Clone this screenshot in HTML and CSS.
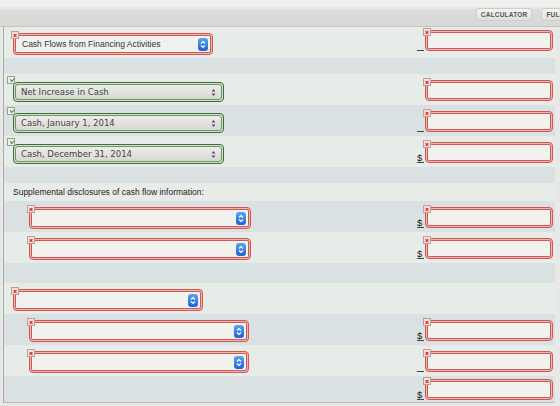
FILE: index.html
```html
<!DOCTYPE html>
<html lang="en">
<head>
    <meta charset="UTF-8">
    <title>Statement of Cash Flows</title>
    <link rel="stylesheet" href="styles.css">
</head>
<body>
    <div class="toolbar">
        <button class="tool-btn">Calculator</button>
        <button class="tool-btn">Full Screen</button>
    </div>

    <div class="sheet">
        <!-- financing section heading -->
        <div class="row">
            <div class="left">
                <div class="field bad indent-1 w-200">
                    <span class="mark x"></span>
                    <div class="box">
                        <span class="label">Cash Flows from Financing Activities</span>
                        <span class="stepper"><svg width="10" height="13" viewBox="0 0 10 13"><path d="M3 5.5 5 3.5 7 5.5M3 7.5 5 9.5 7 7.5" fill="none" stroke="#fff" stroke-width="1.2"/></svg></span>
                    </div>
                </div>
            </div>
            <div class="right top">
                <span class="unit"></span>
                <div class="field bad amount"><span class="mark x"></span><div class="box"></div></div>
            </div>
        </div>

        <div class="row alt spacer"></div>

        <div class="row">
            <div class="left">
                <div class="field good indent-1 w-211">
                    <span class="mark ok"></span>
                    <div class="box plain">
                        <span class="label">Net Increase in Cash</span>
                        <svg class="arrows" width="5" height="9" viewBox="0 0 5 9"><path d="M2.5 1 4.5 3.5H.5zM2.5 8 .5 5.5h4z" fill="#555"/></svg>
                    </div>
                </div>
            </div>
            <div class="right">
                <span class="unit none"></span>
                <div class="field bad amount"><span class="mark x"></span><div class="box"></div></div>
            </div>
        </div>

        <div class="row alt">
            <div class="left">
                <div class="field good indent-1 w-211">
                    <span class="mark ok"></span>
                    <div class="box plain">
                        <span class="label">Cash, January 1, 2014</span>
                        <svg class="arrows" width="5" height="9" viewBox="0 0 5 9"><path d="M2.5 1 4.5 3.5H.5zM2.5 8 .5 5.5h4z" fill="#555"/></svg>
                    </div>
                </div>
            </div>
            <div class="right">
                <span class="unit"></span>
                <div class="field bad amount"><span class="mark x"></span><div class="box"></div></div>
            </div>
        </div>

        <div class="row">
            <div class="left">
                <div class="field good indent-1 w-211">
                    <span class="mark ok"></span>
                    <div class="box plain">
                        <span class="label">Cash, December 31, 2014</span>
                        <svg class="arrows" width="5" height="9" viewBox="0 0 5 9"><path d="M2.5 1 4.5 3.5H.5zM2.5 8 .5 5.5h4z" fill="#555"/></svg>
                    </div>
                </div>
            </div>
            <div class="right">
                <span class="unit">$</span>
                <div class="field bad amount"><span class="mark x"></span><div class="box"></div></div>
            </div>
        </div>

        <div class="row alt spacer"></div>

        <div class="row note">Supplemental disclosures of cash flow information:</div>

        <div class="row alt">
            <div class="left">
                <div class="field bad indent-2 w-222">
                    <span class="mark x"></span>
                    <div class="box">
                        <span class="label"></span>
                        <span class="stepper"><svg width="10" height="13" viewBox="0 0 10 13"><path d="M3 5.5 5 3.5 7 5.5M3 7.5 5 9.5 7 7.5" fill="none" stroke="#fff" stroke-width="1.2"/></svg></span>
                    </div>
                </div>
            </div>
            <div class="right">
                <span class="unit">$</span>
                <div class="field bad amount"><span class="mark x"></span><div class="box"></div></div>
            </div>
        </div>

        <div class="row">
            <div class="left">
                <div class="field bad indent-2 w-222">
                    <span class="mark x"></span>
                    <div class="box">
                        <span class="label"></span>
                        <span class="stepper"><svg width="10" height="13" viewBox="0 0 10 13"><path d="M3 5.5 5 3.5 7 5.5M3 7.5 5 9.5 7 7.5" fill="none" stroke="#fff" stroke-width="1.2"/></svg></span>
                    </div>
                </div>
            </div>
            <div class="right">
                <span class="unit">$</span>
                <div class="field bad amount"><span class="mark x"></span><div class="box"></div></div>
            </div>
        </div>

        <div class="row alt gap"></div>

        <div class="row">
            <div class="left">
                <div class="field bad indent-1 w-190">
                    <span class="mark x"></span>
                    <div class="box">
                        <span class="label"></span>
                        <span class="stepper"><svg width="10" height="13" viewBox="0 0 10 13"><path d="M3 5.5 5 3.5 7 5.5M3 7.5 5 9.5 7 7.5" fill="none" stroke="#fff" stroke-width="1.2"/></svg></span>
                    </div>
                </div>
            </div>
            <div></div>
        </div>

        <div class="row alt">
            <div class="left">
                <div class="field bad indent-2 w-220">
                    <span class="mark x"></span>
                    <div class="box">
                        <span class="label"></span>
                        <span class="stepper"><svg width="10" height="13" viewBox="0 0 10 13"><path d="M3 5.5 5 3.5 7 5.5M3 7.5 5 9.5 7 7.5" fill="none" stroke="#fff" stroke-width="1.2"/></svg></span>
                    </div>
                </div>
            </div>
            <div class="right">
                <span class="unit">$</span>
                <div class="field bad amount"><span class="mark x"></span><div class="box"></div></div>
            </div>
        </div>

        <div class="row">
            <div class="left">
                <div class="field bad indent-2 w-220">
                    <span class="mark x"></span>
                    <div class="box">
                        <span class="label"></span>
                        <span class="stepper"><svg width="10" height="13" viewBox="0 0 10 13"><path d="M3 5.5 5 3.5 7 5.5M3 7.5 5 9.5 7 7.5" fill="none" stroke="#fff" stroke-width="1.2"/></svg></span>
                    </div>
                </div>
            </div>
            <div class="right">
                <span class="unit"></span>
                <div class="field bad amount"><span class="mark x"></span><div class="box"></div></div>
            </div>
        </div>

        <div class="row alt end">
            <div></div>
            <div class="right">
                <span class="unit">$</span>
                <div class="field bad amount"><span class="mark x"></span><div class="box"></div></div>
            </div>
        </div>
    </div>
</body>
</html>
```

FILE: styles.css
```css
* {
    box-sizing: border-box;
}
html, body {
    margin: 0;
}
body {
    width: 560px;
    height: 406px;
    overflow: hidden;
    background: #e8e9e7;
    font-family: "Liberation Sans", Arial, sans-serif;
    color: #333;
}

/* top bar */
.toolbar {
    display: flex;
    justify-content: flex-end;
    align-items: flex-start;
    gap: 9px;
    height: 27px;
    margin-right: -44px;
    padding: 8px 5px 0 0;
    background: linear-gradient(#f1f1ef 0, #f1f1ef 22%, #dcdddb 40%, #d8d9d7 100%);
    border-bottom: 1px solid #c3c5c3;
}
.tool-btn {
    height: 13px;
    padding: 0 4px;
    font: bold 6.5px "Liberation Sans", Arial, sans-serif;
    letter-spacing: 0.2px;
    text-transform: uppercase;
    color: #555;
    background: linear-gradient(#f4f4f2, #dfe0de);
    border: 1px solid #cdcecc;
    border-radius: 3px;
}

/* answer sheet */
.sheet {
    margin: 0 5px 0 3px;
    border-left: 1px solid #a8aaa8;
    border-bottom: 1px solid #b9bbb9;
}
.row {
    display: grid;
    grid-template-columns: 1fr auto;
    align-items: end;
    height: 31px;
    padding: 0 2px 3px 0;
    background: #e8ece9;
}
.row.alt {
    background: #d9e1e3;
}
.row.spacer {
    height: 16px;
}
.row.gap {
    height: 20px;
}
.row.end {
    height: 26px;
    padding-bottom: 1px;
}
.row.note {
    display: flex;
    align-items: center;
    height: 18px;
    padding: 0 0 0 9px;
    font-size: 8.5px;
    color: #222;
}

.right {
    display: flex;
    align-items: flex-end;
    gap: 1px;
    margin-bottom: 1px;
}
.right.top {
    align-self: start;
    margin-top: 3px;
}
.unit {
    width: 7px;
    height: 10px;
    font-size: 9.5px;
    line-height: 10px;
    color: #222;
    border-bottom: 1px solid #444;
}
.unit.none {
    border-color: transparent;
}

/* fields */
.field {
    position: relative;
    border-radius: 4px;
    padding: 1px;
}
.field.bad {
    height: 22px;
    border: 1px solid #cd5856;
    background: #efb5ae;
}
.field.good {
    height: 20px;
    border: 1px solid #3e6e3a;
    background: #d2e1cc;
}
.field.amount {
    width: 128px;
    height: 21px;
}
.indent-1 { margin-left: 9px; }
.indent-2 { margin-left: 25px; }
.w-190 { width: 190px; }
.w-200 { width: 200px; }
.w-211 { width: 211px; }
.w-220 { width: 220px; }
.w-222 { width: 222px; }

.box {
    display: flex;
    align-items: center;
    height: 100%;
    padding: 0 2px 0 6px;
    border: 1px solid #cd5856;
    border-radius: 2px;
    background: #f1f2ee;
    font-size: 8.5px;
    color: #333;
}
.box.plain {
    padding: 0 5px 0 5px;
    border-color: #6e9568;
    border-radius: 3px;
    background: linear-gradient(#ededea, #d7d8d3);
    font-family: "DejaVu Sans", Verdana, sans-serif;
    color: #444;
}
.label {
    flex: 1;
    white-space: nowrap;
}
.stepper {
    display: flex;
    width: 10px;
    height: 13px;
    border-radius: 3px;
    background: linear-gradient(#5ea3f3, #1e62d2);
}

/* status marks on the corner of each field */
.mark {
    position: absolute;
    top: -3px;
    left: -3px;
    width: 8px;
    height: 8px;
    border: 1px solid #c49c94;
    background: #f4e2dc;
}
.mark.x::before, .mark.x::after {
    content: "";
    position: absolute;
    left: 1px;
    top: 2.5px;
    width: 4px;
    height: 1.2px;
    background: #d0231f;
    transform: rotate(45deg);
}
.mark.x::after {
    transform: rotate(-45deg);
}
.field.good .mark {
    top: -7px;
    left: -7px;
}
.mark.ok {
    border-color: #9b9b97;
    background: #efefeb;
}
.mark.ok::before {
    content: "";
    position: absolute;
    left: 1.5px;
    top: 1px;
    width: 3px;
    height: 1.6px;
    border-left: 1px solid #4a8a3a;
    border-bottom: 1px solid #4a8a3a;
    transform: rotate(-45deg);
}
```
